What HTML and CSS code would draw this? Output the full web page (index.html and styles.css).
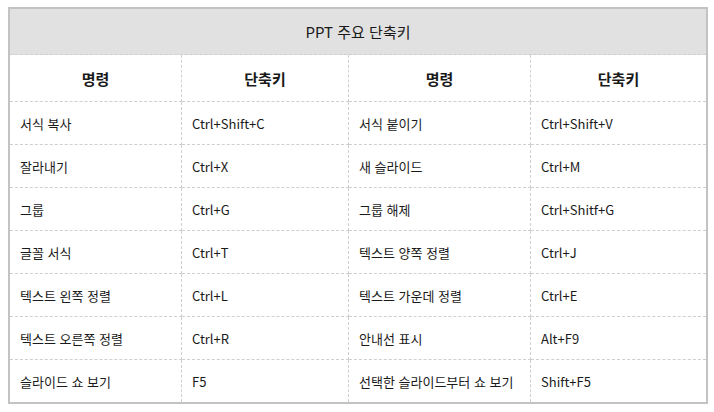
FILE: index.html
```html
<!DOCTYPE html>
<html lang="ko">
<head>
<meta charset="utf-8">
<link rel="stylesheet" href="styles.css">
</head>
<body>
<table class="shortcuts">
  <colgroup>
    <col class="c1"><col class="c2"><col class="c3"><col class="c4">
  </colgroup>
  <thead>
    <tr class="title-row"><th colspan="4" class="title">PPT 주요 단축키</th></tr>
    <tr class="head-row"><th>명령</th><th>단축키</th><th>명령</th><th>단축키</th></tr>
  </thead>
  <tbody>
    <tr><td>서식 복사</td><td>Ctrl+Shift+C</td><td>서식 붙이기</td><td>Ctrl+Shift+V</td></tr>
    <tr><td>잘라내기</td><td>Ctrl+X</td><td>새 슬라이드</td><td>Ctrl+M</td></tr>
    <tr><td>그룹</td><td>Ctrl+G</td><td>그룹 해제</td><td>Ctrl+Shitf+G</td></tr>
    <tr><td>글꼴 서식</td><td>Ctrl+T</td><td>텍스트 양쪽 정렬</td><td>Ctrl+J</td></tr>
    <tr><td>텍스트 왼쪽 정렬</td><td>Ctrl+L</td><td>텍스트 가운데 정렬</td><td>Ctrl+E</td></tr>
    <tr><td>텍스트 오른쪽 정렬</td><td>Ctrl+R</td><td>안내선 표시</td><td>Alt+F9</td></tr>
    <tr><td>슬라이드 쇼 보기</td><td>F5</td><td>선택한 슬라이드부터 쇼 보기</td><td>Shift+F5</td></tr>
  </tbody>
</table>
</body>
</html>
```
FILE: styles.css
```css
html, body {
  margin: 0;
  padding: 0;
  background: #ffffff;
}
body {
  padding: 7px 0 0 8px;
  font-family: "Noto Sans CJK KR", "Noto Sans", sans-serif;
  color: #1a1a1a;
}
.shortcuts {
  border-collapse: separate;
  border-spacing: 0;
  border: 2px solid #c3c3c3;
  width: 700px;
  table-layout: fixed;
}
.c1 { width: 172px; }
.c2 { width: 167px; }
.c3 { width: 182px; }
.c4 { width: 175px; }
.shortcuts th,
.shortcuts td {
  border-right: 1px dashed #cfcfcf;
  border-bottom: 1px dashed #cfcfcf;
  padding: 0 0 0 10px;
  vertical-align: middle;
  white-space: nowrap;
}
.shortcuts th:last-child,
.shortcuts td:last-child {
  border-right: none;
}
.shortcuts tbody tr:last-child td {
  border-bottom: none;
}
.title-row th {
  height: 45px;
  background: #e1e1e1;
  font-size: 15px;
  font-weight: normal;
  text-align: center;
  padding: 0;
}
.head-row th {
  height: 46px;
  font-size: 15px;
  font-weight: bold;
  text-align: center;
  padding: 0;
}
.shortcuts td {
  height: 42px;
  font-size: 13px;
}
```
